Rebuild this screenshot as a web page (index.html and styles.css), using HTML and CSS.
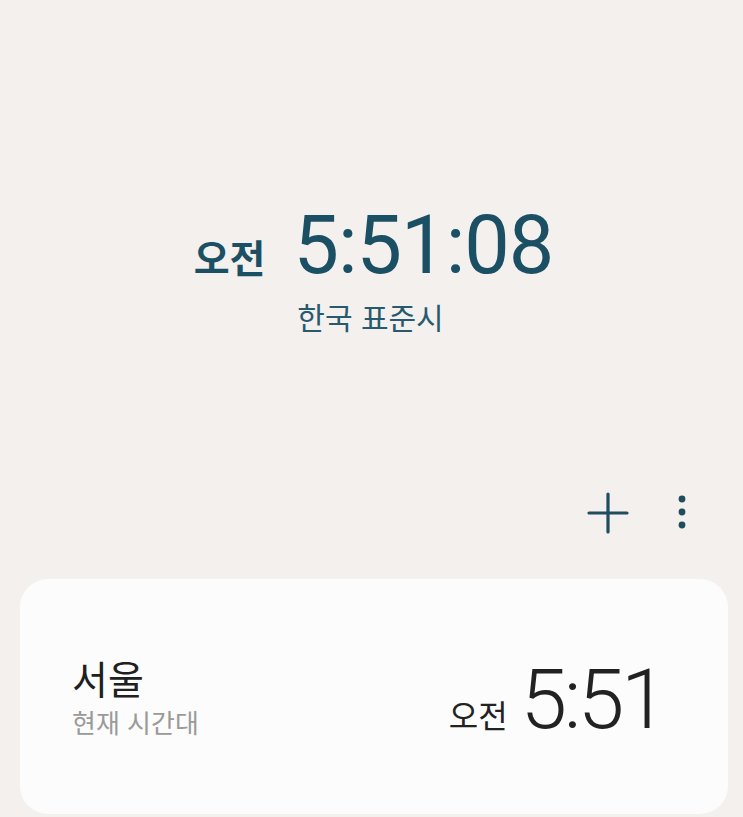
FILE: index.html
```html
<!DOCTYPE html>
<html lang="ko">
<head>
    <meta charset="utf-8">
    <title>세계 시각</title>
    <link rel="stylesheet" href="styles.css">
</head>
<body>
    <section class="clock">
        <div class="clock-time">
            <span class="clock-ampm">오전</span>
            <span class="clock-digits">5:51:08</span>
        </div>
        <div class="clock-zone">한국 표준시</div>
    </section>
    <div class="actions">
        <button type="button" class="icon-button" aria-label="추가">
            <svg width="44" height="44" viewBox="0 0 44 44">
                <path d="M22 3v38M3 22h38" stroke="currentColor" stroke-width="3.2" stroke-linecap="round" fill="none"/>
            </svg>
        </button>
        <button type="button" class="icon-button menu" aria-label="더보기">
            <svg width="12" height="40" viewBox="0 0 12 40">
                <circle cx="6" cy="6" r="3.4" fill="currentColor"/>
                <circle cx="6" cy="19" r="3.4" fill="currentColor"/>
                <circle cx="6" cy="32" r="3.4" fill="currentColor"/>
            </svg>
        </button>
    </div>
    <div class="city-card">
        <div class="city-info">
            <div class="city-name">서울</div>
            <div class="city-note">현재 시간대</div>
        </div>
        <div class="city-time">
            <span class="city-ampm">오전</span>
            <span class="city-digits">5:51</span>
        </div>
    </div>
</body>
</html>
```

FILE: styles.css
```css
body {
    margin: 0;
    padding: 0;
    background: #f4f0ee;
    font-family: 'Noto Sans CJK KR', 'Noto Sans', sans-serif;
    height: 817px;
    overflow: hidden;
}
.clock {
    padding-top: 206px;
    display: flex;
    flex-direction: column;
    align-items: center;
    color: #1b4f63;
}
.clock-time {
    display: flex;
    align-items: baseline;
    gap: 28px;
    line-height: 80px;
    margin-left: 4px;
}
.clock-ampm {
    font-size: 39px;
    font-weight: 700;
}
.clock-digits {
    font-family: Roboto, sans-serif;
    font-size: 81px;
    letter-spacing: -1px;
}
.clock-zone {
    margin-top: 0;
    font-size: 30px;
    line-height: 40px;
    color: #275a6e;
    margin-right: 2px;
}
.actions {
    margin-top: 155px;
    display: flex;
    justify-content: flex-end;
    align-items: center;
    gap: 46px;
    padding-right: 55px;
    color: #1f4d5e;
}
.icon-button {
    background: none;
    border: none;
    padding: 0;
    color: inherit;
    display: flex;
}
.city-card {
    margin: 44px 15px 0 20px;
    height: 235px;
    background: #fcfcfc;
    border-radius: 28px;
    display: flex;
    align-items: center;
    justify-content: space-between;
    padding: 0 64px 0 52px;
}
.city-name {
    font-size: 39px;
    line-height: 46px;
    color: #202020;
}
.city-note {
    font-size: 26px;
    line-height: 34px;
    color: #9a9a9a;
    margin-top: 5px;
}
.city-time {
    display: flex;
    align-items: baseline;
    gap: 13px;
    color: #222;
    margin-top: 7px;
}
.city-ampm {
    font-size: 32px;
}
.city-digits {
    font-family: Roboto, sans-serif;
    font-weight: 300;
    font-size: 84px;
    letter-spacing: -3.5px;
    line-height: 84px;
}
```
